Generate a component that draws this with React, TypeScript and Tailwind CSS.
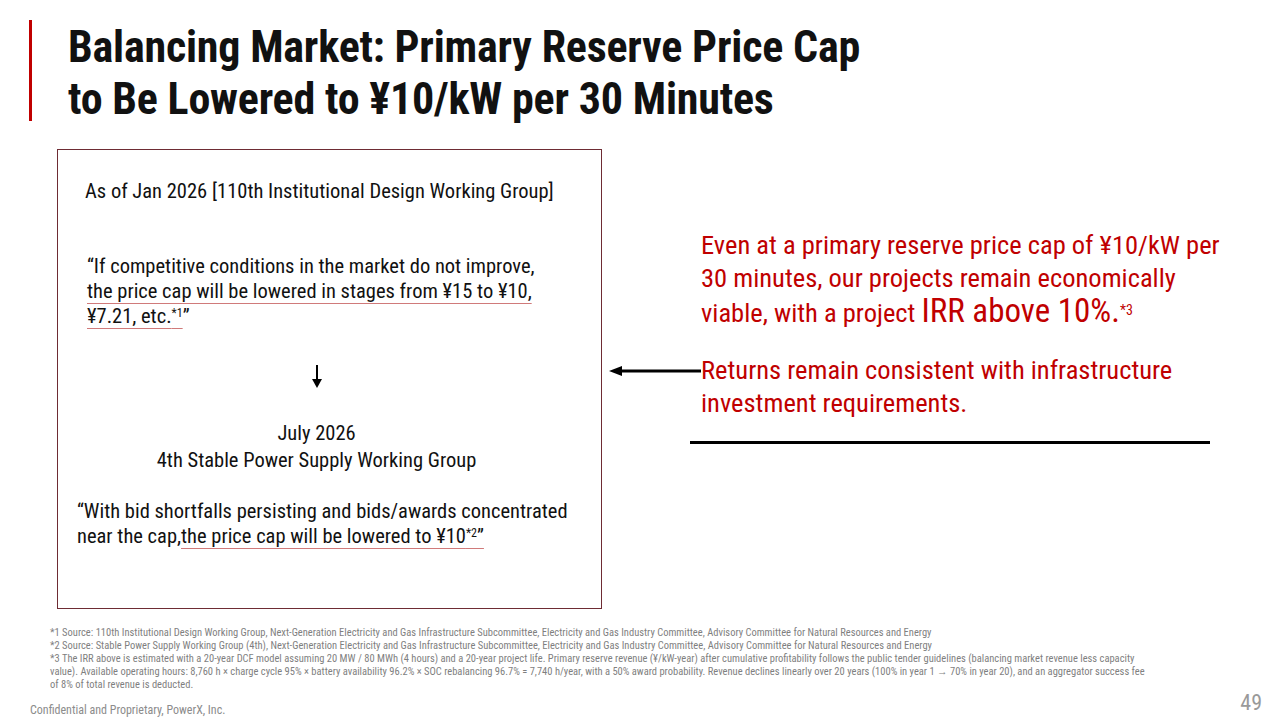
import { ReactNode } from "react";

const FONT = "font-['Roboto_Condensed','Roboto',sans-serif]";

function Mark({ children }: { children: ReactNode }) {
  return (
    <span className="underline decoration-[#d07a7a] decoration-1 underline-offset-[5px]">{children}</span>
  );
}

function LeftArrow() {
  return (
    <svg width="92" height="14" viewBox="0 0 92 14" className="shrink-0">
      <line x1="10" y1="7" x2="92" y2="7" stroke="#000" strokeWidth="3" />
      <polygon points="0,7 13,2 13,12" fill="#000" />
    </svg>
  );
}

function DownArrow() {
  return (
    <svg width="12" height="24" viewBox="0 0 12 24">
      <line x1="6" y1="0" x2="6" y2="16" stroke="#000" strokeWidth="2" />
      <polygon points="1,14 11,14 6,23" fill="#000" />
    </svg>
  );
}

export default function App() {
  return (
    <div className={`w-[1280px] h-[720px] bg-white overflow-hidden flex flex-col ${FONT}`}>
      <div className="flex items-start pt-[20px] pl-[29px]">
        <div className="w-[3px] h-[101px] bg-[#c00000] shrink-0" />
        <h1 className="ml-[36px] mt-[1px] text-[44px] leading-[52px] font-bold text-[#111] tracking-[-0.2px] whitespace-nowrap">
          Balancing Market: Primary Reserve Price Cap
          <br />
          to Be Lowered to ¥10/kW per 30 Minutes
        </h1>
      </div>

      <div className="flex mt-[24px] pl-[57px]">
        <div className="w-[545px] h-[460px] border-[1.5px] border-[#6e2c34] text-[20.5px] leading-[25px] text-[#111] shrink-0">
          <p className="pl-[27px] pt-[29px]">As of Jan 2026 [110th Institutional Design Working Group]</p>
          <p className="pl-[29px] mt-[50px]">
            “If competitive conditions in the market do not improve,
            <br />
            <Mark>the price cap will be lowered in stages from ¥15 to ¥10,</Mark>
            <br />
            <Mark>
              ¥7.21, etc.<sup className="text-[12px]">*1</sup>
            </Mark>
            ”
          </p>
          <div className="flex justify-center mt-[36px] pr-[26px]">
            <DownArrow />
          </div>
          <p className="text-center mt-[31px] pr-[26px] leading-[27px]">
            July 2026
            <br />
            4th Stable Power Supply Working Group
          </p>
          <p className="pl-[19px] mt-[25px]">
            “With bid shortfalls persisting and bids/awards concentrated
            <br />
            near the cap,
            <Mark>
              the price cap will be lowered to ¥10<sup className="text-[12px]">*2</sup>”
            </Mark>
          </p>
        </div>

        <div className="pl-[7px] pt-[79px] text-[#c00000] text-[26.5px] leading-[33px] whitespace-nowrap">
          <p className="ml-[92px]">
            Even at a primary reserve price cap of ¥10/kW per
            <br />
            30 minutes, our projects remain economically
            <br />
            viable, with a project <span className="text-[33px]">IRR above 10%.</span>
            <sup className="text-[14px]">*3</sup>
          </p>
          <div className="flex items-start mt-[24px]">
            <div className="pt-[11px]">
              <LeftArrow />
            </div>
            <p>
              Returns remain consistent with infrastructure
              <br />
              investment requirements.
            </p>
          </div>
          <div className="ml-[81px] mt-[22px] w-[520px] h-[3px] bg-black" />
        </div>
      </div>

      <div className="pl-[50px] mt-[17px] text-[10.5px] leading-[13px] text-[#7f7f7f] whitespace-nowrap">
        <p>
          *1 Source: 110th Institutional Design Working Group, Next-Generation Electricity and Gas Infrastructure Subcommittee, Electricity and Gas Industry Committee, Advisory Committee for Natural Resources and Energy
        </p>
        <p>
          *2 Source: Stable Power Supply Working Group (4th), Next-Generation Electricity and Gas Infrastructure Subcommittee, Electricity and Gas Industry Committee, Advisory Committee for Natural Resources and Energy
        </p>
        <p>
          *3 The IRR above is estimated with a 20-year DCF model assuming 20 MW / 80 MWh (4 hours) and a 20-year project life. Primary reserve revenue (¥/kW-year) after cumulative profitability follows the public tender guidelines (balancing market revenue less capacity
          <br />
          value). Available operating hours: 8,760 h × charge cycle 95% × battery availability 96.2% × SOC rebalancing 96.7% = 7,740 h/year, with a 50% award probability. Revenue declines linearly over 20 years (100% in year 1 → 70% in year 20), and an aggregator success fee
          <br />
          of 8% of total revenue is deducted.
        </p>
      </div>

      <div className="flex items-end justify-between pl-[30px] pr-[18px] mt-auto pb-[11px] text-[#8c8c8c]">
        <span className="text-[12px] leading-[14px]">Confidential and Proprietary, PowerX, Inc.</span>
        <span className="text-[22px] leading-[24px] mb-[2px] text-[#9a9a9a]">49</span>
      </div>
    </div>
  );
}
